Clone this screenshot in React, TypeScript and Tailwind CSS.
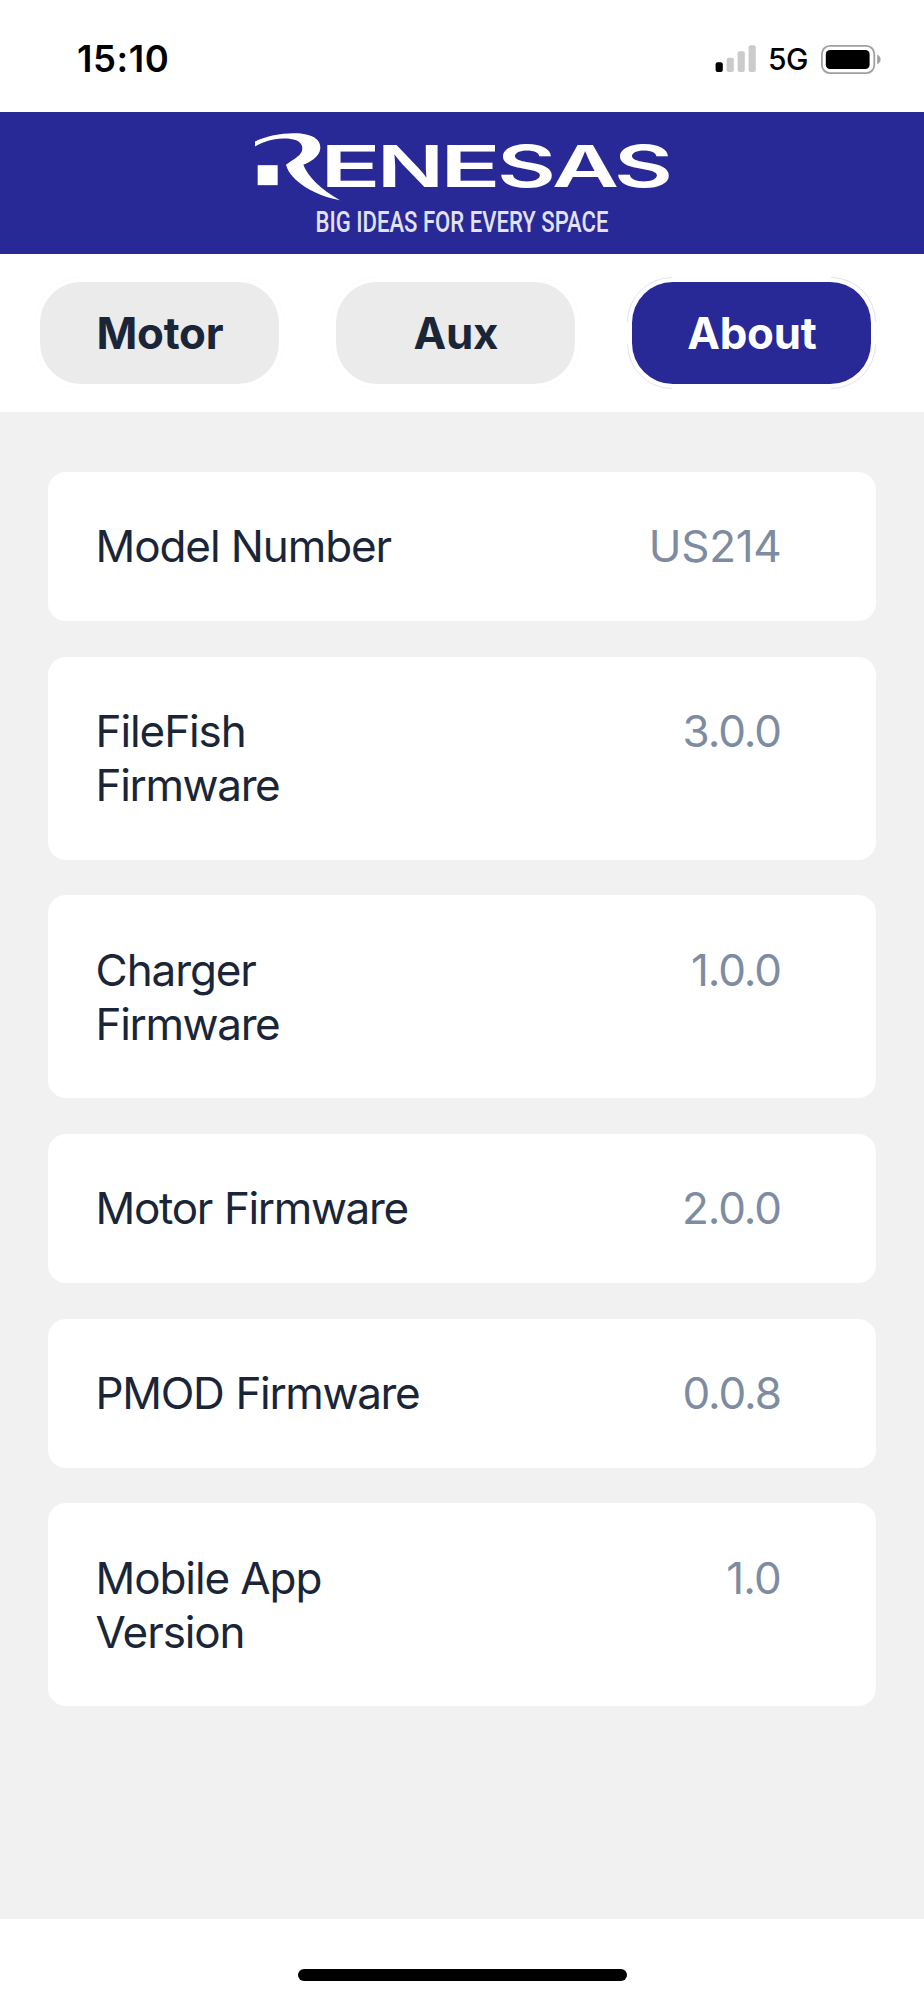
import React from "react";

const tabs = [
  { label: "Motor", active: false },
  { label: "Aux", active: false },
  { label: "About", active: true },
];

const rows = [
  { label: ["Model Number"], value: "US214", valueClass: "tracking-[-0.3px]" },
  { label: ["FileFish", "Firmware"], value: "3.0.0", valueClass: "tracking-[-1.1px] mr-[0.6px]" },
  { label: ["Charger", "Firmware"], value: "1.0.0", valueClass: "tracking-[-1.1px] mr-[0.6px]" },
  { label: ["Motor Firmware"], value: "2.0.0", valueClass: "tracking-[-1.1px] mr-[0.6px]" },
  { label: ["PMOD Firmware"], value: "0.0.8", valueClass: "tracking-[-1.1px] mr-[0.6px]" },
  { label: ["Mobile App", "Version"], value: "1.0", valueClass: "tracking-[-0.9px] mr-[0.6px]" },
];

function SignalIcon() {
  return (
    <svg width="42" height="28" viewBox="0 0 42 28">
      <rect x="0.6" y="17.3" width="7.2" height="9.7" rx="2" fill="#000" />
      <rect x="11.6" y="12.8" width="7.2" height="14.2" rx="2" fill="#cbcbcb" />
      <rect x="22.6" y="6.3" width="7.2" height="20.7" rx="2" fill="#cbcbcb" />
      <rect x="33.6" y="0.2" width="7.2" height="26.8" rx="2" fill="#cbcbcb" />
    </svg>
  );
}

function BatteryIcon() {
  return (
    <svg width="60" height="29" viewBox="0 0 60 29">
      <rect x="0.9" y="0.9" width="52.4" height="27.2" rx="8" fill="none" stroke="#a0a0a0" strokeWidth="1.8" />
      <rect x="4.8" y="4.9" width="43.8" height="19.2" rx="4.2" fill="#000" />
      <path d="M56.2 9.8C58 10.3 59.6 12.2 59.6 14.5C59.6 16.8 58 18.7 56.2 19.2Z" fill="#a0a0a0" />
    </svg>
  );
}

const wordmark: [string, number, number][] = [
  ["E", 320, 61],
  ["N", 377, 67],
  ["E", 440, 61],
  ["S", 497, 59],
  ["A", 552, 67],
  ["S", 614, 59],
];

function Logo() {
  return (
    <svg className="h-[142px] w-full" viewBox="0 111.5 924 142">
      <g transform="translate(240 105) scale(0.33333)" fill="#fff">
        <path d="M45 108C80 90 128 82 165 83C215 84 243 100 241 128C239 155 208 170 190 178C202 212 242 252 300 284C232 274 150 228 138 178C160 160 188 152 187 127C186 102 150 98 130 99C95 100 66 110 45 123Z" />
        <rect x="53" y="179" width="60" height="60" />
      </g>
      <g fill="#fff" className="font-['Inter',sans-serif] text-[58px] font-semibold">
        {wordmark.map(([ch, x, w], i) => (
          <text key={i} x={x} y="186.3" textLength={w} lengthAdjust="spacingAndGlyphs">
            {ch}
          </text>
        ))}
      </g>
      <text
        x="315.5"
        y="231.8"
        textLength="293"
        lengthAdjust="spacingAndGlyphs"
        fill="#e2e2f2"
        className="font-['Roboto',sans-serif] text-[29px] font-medium"
      >
        BIG IDEAS FOR EVERY SPACE
      </text>
    </svg>
  );
}

function TabHalo({ active }: { active: boolean }) {
  return (
    <svg
      className="pointer-events-none absolute -top-[5px] -left-[5px] h-[112px] w-[249px]"
      viewBox="0 0 249 112"
      fill="none"
      stroke={active ? "#e2e2f2" : "#fcfcfc"}
      strokeWidth="1"
    >
      <path d="M0.5 45A44.5 44.5 0 0 1 45 0.5M204 0.5A44.5 44.5 0 0 1 248.5 45M248.5 67A44.5 44.5 0 0 1 204 111.5M45 111.5A44.5 44.5 0 0 1 0.5 67" />
    </svg>
  );
}

export default function App() {
  return (
    <div className="flex h-[2000px] w-[924px] flex-col bg-white font-['Inter',sans-serif] antialiased">
      <header className="flex h-[111.5px] shrink-0 items-center justify-between pt-[7px] pr-[43px] pl-[77px]">
        <span className="text-[36.5px] leading-none font-semibold tracking-[0.6px] text-black">15:10</span>
        <div className="flex items-center">
          <SignalIcon />
          <span className="ml-[11px] w-[53px] text-[30px] leading-none font-medium tracking-[-0.5px] text-black">5G</span>
          <BatteryIcon />
        </div>
      </header>

      <div className="h-[142px] shrink-0 bg-[#282896]">
        <Logo />
      </div>

      <nav className="flex h-[158.5px] shrink-0 items-start gap-[57px] pt-[28.5px] pl-[40.4px]">
        {tabs.map((t) => (
          <button
            key={t.label}
            className={
              "relative flex h-[102px] w-[239px] items-center justify-center rounded-[41px] pt-[2px] text-[43.8px] leading-none font-bold tracking-[-0.2px]" +
              (t.active ? " bg-[#282896] text-white" : " bg-[#ebebeb] text-[#1a2538]")
            }
          >
            <TabHalo active={t.active} />
            {t.label}
          </button>
        ))}
      </nav>

      <main className="flex h-[1507px] shrink-0 flex-col gap-[35.6px] bg-[#f1f1f1] px-[47.6px] pt-[59.9px]">
        {rows.map((r) => (
          <section
            key={r.label.join(" ")}
            className="flex items-start justify-between rounded-[18px] bg-white pt-[48.5px] pr-[95px] pb-[46.9px] pl-[48px] text-[44px] leading-[53.8px]"
          >
            <div className="text-[#1a2538]">
              {r.label.map((line) => (
                <div
                  key={line}
                  className={line.includes("Firmware") ? "tracking-[-1.35px] [word-spacing:1px]" : "tracking-[-1.1px]"}
                >
                  {line}
                </div>
              ))}
            </div>
            <div className={"text-[#7e8ca2] " + r.valueClass}>{r.value}</div>
          </section>
        ))}
      </main>

      <footer className="flex grow items-start justify-center pt-[50px]">
        <div className="h-[12px] w-[329px] rounded-full bg-black" />
      </footer>
    </div>
  );
}
